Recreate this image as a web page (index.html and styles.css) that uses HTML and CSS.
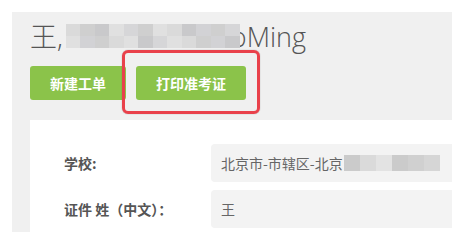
FILE: index.html
```html
<!DOCTYPE html>
<html lang="zh-CN">
<head>
<meta charset="utf-8">
<title>工单</title>
<link rel="stylesheet" href="styles.css">
</head>
<body>
<div class="page">
  <div class="panel">
    <h1 class="title">王,<span class="mosaic mosaic-title"><i class="c1"></i><i class="c2"></i><i class="c3"></i><i class="c4"></i><i class="c5"></i><i class="c2"></i><i class="c4"></i><i class="c1"></i><i class="c3"></i><i class="c6"></i><i class="c2"></i><i class="c5"></i><i class="c4"></i><i class="c6"></i><i class="c2"></i><i class="c1"></i><i class="c4"></i><i class="c3"></i><i class="c5"></i><i class="c4"></i><i class="c1"></i><i class="c2"></i><i class="c6"></i><i class="c3"></i></span>oMing</h1>
    <div class="actions">
      <button class="btn">新建工单</button>
      <button class="btn btn-marked">打印准考证</button>
    </div>
    <div class="card">
      <div class="row">
        <div class="label">学校:</div>
        <div class="field">北京市-市辖区-北京<span class="mosaic mosaic-field"><i class="d1"></i><i class="d2"></i><i class="d3"></i><i class="d1"></i><i class="d4"></i><i class="d5"></i></span></div>
      </div>
      <div class="row">
        <div class="label">证件 姓（中文）：</div>
        <div class="field">王</div>
      </div>
    </div>
  </div>
</div>
</body>
</html>
```
FILE: styles.css
```css
* { box-sizing: border-box; }
html, body { margin: 0; padding: 0; background: #fff; }
body {
  font-family: "Open Sans", "Noto Sans CJK SC", sans-serif;
  color: #555;
}
.page { padding: 12px; }
.panel {
  width: 440px;
  height: 220px;
  background: #f0f0f0;
  overflow: hidden;
  padding: 7px 0 0 18px;
}
.title {
  margin: 0;
  height: 36px;
  line-height: 36px;
  font-size: 27px;
  font-weight: 300;
  color: #555;
  white-space: nowrap;
}
.mosaic { display: inline-grid; vertical-align: top; }
.mosaic i { display: block; }
.mosaic-title {
  grid-template-columns: repeat(12, 14.5px);
  grid-template-rows: 12px 12px;
  margin-top: 5px;
  margin-left: 3px;
  margin-right: -9px;
  position: relative;
}
.c1 { background: #dadada; }
.c2 { background: #cfcfcf; }
.c3 { background: #c9c9cb; }
.c4 { background: #e0e0e0; }
.c5 { background: #d6d6d8; }
.c6 { background: #d2d2d5; }
.actions {
  display: flex;
  gap: 10px;
  margin-top: 11px;
}
.btn {
  position: relative;
  height: 34px;
  padding: 0 20px;
  border: 0;
  border-radius: 3px;
  background: #8bc34a;
  color: #fff;
  font-family: "Noto Sans CJK SC", sans-serif;
  font-size: 14px;
  font-weight: 700;
  cursor: pointer;
}
.btn-marked::after {
  content: "";
  position: absolute;
  left: -14px;
  right: -14px;
  top: -16px;
  bottom: -14px;
  border: 3.5px solid #e9414b;
  border-radius: 6px;
  box-shadow: 0 0 1px rgba(0,0,0,0.45);
}
.card {
  width: 460px;
  margin-top: 20px;
  height: 120px;
  background: #fff;
  padding: 24px 0 0 34px;
  display: flex;
  flex-direction: column;
  gap: 8px;
}
.row { display: flex; align-items: center; }
.label {
  flex: 0 0 147px;
  font-family: "Noto Sans CJK SC", sans-serif;
  font-size: 14px;
  font-weight: 700;
  color: #555;
}
.field {
  flex: 0 0 300px;
  height: 38px;
  line-height: 38px;
  padding-left: 10px;
  border-radius: 4px;
  background: #f3f3f3;
  font-family: "Noto Sans CJK SC", sans-serif;
  font-size: 14px;
  color: #666;
  white-space: nowrap;
}
.mosaic-field {
  grid-template-columns: repeat(6, 16px);
  grid-template-rows: 16px;
  margin-top: 11px;
  margin-left: 1px;
}
.d1 { background: #cbcbcb; }
.d2 { background: #dadada; }
.d3 { background: #e3e3e3; }
.d4 { background: #d0d0d0; }
.d5 { background: #d6d6d6; }
```
